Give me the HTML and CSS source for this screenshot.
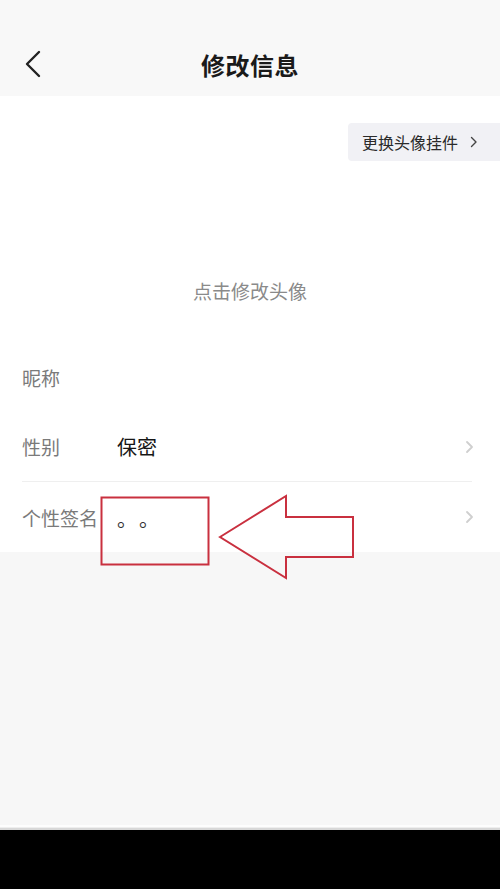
FILE: index.html
```html
<!DOCTYPE html>
<html lang="zh-CN">
<head>
<meta charset="utf-8">
<title>修改信息</title>
<link rel="stylesheet" href="styles.css">
</head>
<body>
<div class="page">
  <header class="topbar">
    <div class="back">
      <svg width="18" height="28" viewBox="0 0 18 28"><path d="M15 2 L3 14 L15 26" fill="none" stroke="#222" stroke-width="2.4" stroke-linecap="round" stroke-linejoin="round"/></svg>
    </div>
    <h1 class="title">修改信息</h1>
    <div class="side"></div>
  </header>

  <section class="avatar-section">
    <div class="chip-row">
      <div class="chip">
        <span>更换头像挂件</span>
        <svg width="8" height="12" viewBox="0 0 8 12"><path d="M1.5 1.5 L6 6 L1.5 10.5" fill="none" stroke="#444" stroke-width="1.4" stroke-linecap="round" stroke-linejoin="round"/></svg>
      </div>
    </div>
    <div class="avatar-hint">点击修改头像</div>
  </section>

  <section class="list">
    <div class="row">
      <span class="label">昵称</span>
      <span class="value"></span>
    </div>
    <div class="row with-divider">
      <span class="label">性别</span>
      <span class="value">保密</span>
      <svg class="arrow" width="9" height="14" viewBox="0 0 9 14"><path d="M2 2 L7 7 L2 12" fill="none" stroke="#cfcfcf" stroke-width="1.8" stroke-linecap="round" stroke-linejoin="round"/></svg>
    </div>
    <div class="row">
      <span class="label">个性签名</span>
      <span class="value dots"><span class="dot">。</span><span class="dot">。</span></span>
      <svg class="arrow" width="9" height="14" viewBox="0 0 9 14"><path d="M2 2 L7 7 L2 12" fill="none" stroke="#cfcfcf" stroke-width="1.8" stroke-linecap="round" stroke-linejoin="round"/></svg>
    </div>
  </section>

  <div class="filler"></div>
  <div class="bottom-lines"></div>
  <div class="navbar"></div>

  <svg class="annotation" width="500" height="889" viewBox="0 0 500 889">
    <rect x="101.5" y="497.5" width="107" height="67" fill="none" stroke="#c9303f" stroke-width="2"/>
    <polygon points="220,537 286,496 286,517 353,517 353,557 286,557 286,578" fill="none" stroke="#c9303f" stroke-width="2" stroke-linejoin="miter"/>
  </svg>
</div>
</body>
</html>
```

FILE: styles.css
```css
* { box-sizing: border-box; }
html, body { margin: 0; padding: 0; }
body {
  width: 500px;
  height: 889px;
  overflow: hidden;
  background: #f7f7f7;
  font-family: "Noto Sans CJK SC", "Noto Sans", sans-serif;
}
.page {
  position: relative;
  width: 500px;
  height: 889px;
  display: flex;
  flex-direction: column;
}
.topbar {
  height: 96px;
  background: #f8f8f8;
  display: grid;
  grid-template-columns: 1fr auto 1fr;
  align-items: center;
  padding-top: 32px;
}
.topbar > * { height: 64px; display: flex; align-items: center; }
.back { padding-left: 24px; }
.back svg { display: block; margin-top: -1px; }
.title {
  margin: 0;
  font-size: 24px;
  font-weight: 700;
  color: #1a1a1a;
  letter-spacing: 0.5px;
}

.avatar-section {
  background: #fff;
  height: 246px;
  display: flex;
  flex-direction: column;
  padding-top: 27px;
}
.chip-row { display: flex; justify-content: flex-end; }
.chip {
  background: #f1f1f5;
  height: 38px;
  width: 152px;
  display: flex;
  align-items: center;
  padding-left: 14px;
  gap: 12px;
  border-radius: 4px 0 0 4px;
  font-size: 16px;
  color: #2a2a2a;
}
.avatar-hint {
  margin-top: 116px;
  text-align: center;
  font-size: 19px;
  color: #8a8a8a;
  line-height: 28px;
}

.list { background: #fff; padding: 0 22px; }
.row {
  height: 70px;
  display: flex;
  align-items: center;
  position: relative;
}
.with-divider { border-bottom: 1px solid #efefef; margin-right: 6px; }
.label {
  width: 95px;
  font-size: 19px;
  color: #7a7a7a;
}
.value {
  flex: 1;
  font-size: 20px;
  color: #161616;
}
.dots {
  display: flex;
  color: #333;
  padding-top: 2px;
}
.dot {
  display: inline-block;
  width: 22px;
}
.arrow { margin-right: -2px; }
.row:last-child .arrow { margin-right: 4px; }

.filler { flex: 1; background: #f7f7f7; }
.bottom-lines {
  height: 6px;
  background: linear-gradient(#f7f7f7 0 1px, #fdfdfd 1px 3px, #eeeeee 3px 4px, #d8d8d8 4px 6px);
}
.navbar { height: 59px; background: #000; }

.annotation {
  position: absolute;
  left: 0;
  top: 0;
  pointer-events: none;
}
```
